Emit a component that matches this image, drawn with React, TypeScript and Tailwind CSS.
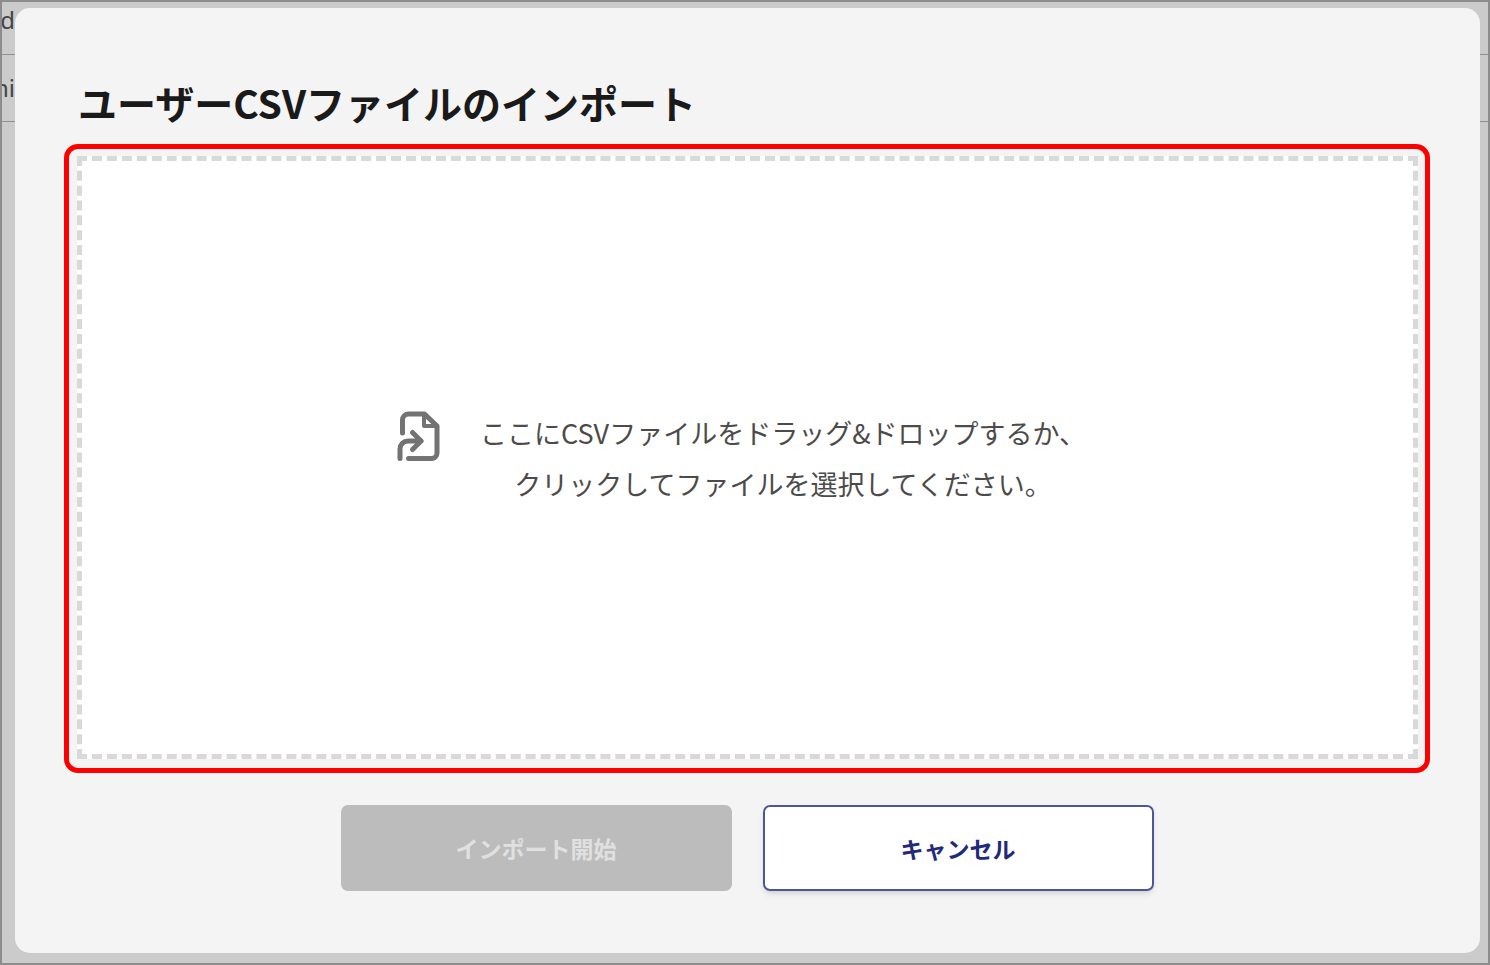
import { useState } from "react";
import type { ChangeEvent, DragEvent } from "react";

const backgroundRows = [
  { id: "email", text: "d", className: "h-[53px] pt-[2px]" },
  { id: "role", text: "ni", className: "h-[67px] pt-[17px]" },
];

function FileImportIcon() {
  return (
    <svg
      className="mt-1 h-[51px] w-11 shrink-0 text-[#737373]"
      viewBox="0 0 44 51"
      fill="none"
      stroke="currentColor"
      strokeWidth="5"
      strokeLinecap="round"
      strokeLinejoin="round"
      aria-hidden="true"
    >
      <path d="M5.500 22V9a6 6 0 0 1 6-6h16L40 15V42a5.500 5.500 0 0 1-5.500 5.500H11.500" />
      <path d="M27 4v11h11.500" strokeWidth="4" />
      <path d="M3 47.500V38a8 8 0 0 1 8-8h13" />
      <path d="M15.500 21.500 24 30l-8.500 8.500" />
    </svg>
  );
}

interface DropZoneProps {
  onSelect: (file: File) => void;
}

function DropZone({ onSelect }: DropZoneProps) {
  const handleChange = (e: ChangeEvent<HTMLInputElement>) => {
    const file = e.target.files?.[0];
    if (file) onSelect(file);
  };

  const handleDrop = (e: DragEvent<HTMLLabelElement>) => {
    e.preventDefault();
    const file = e.dataTransfer.files[0];
    if (file) onSelect(file);
  };

  return (
    <div className="flex flex-1 rounded-[14px] border-5 border-[#ff0000] px-[7px] pt-[7px] pb-[9px] pl-2">
      <label
        htmlFor="csv-file"
        className="flex flex-1 cursor-pointer items-center justify-center border-5 border-dashed border-[#d9d9d9] bg-white pr-3"
        onDragOver={(e) => e.preventDefault()}
        onDrop={handleDrop}
      >
        <input id="csv-file" type="file" accept=".csv" className="sr-only" onChange={handleChange} />
        <span className="flex items-start gap-[39px]">
          <FileImportIcon />
          <span className="text-center text-[27px] leading-[51px] text-[#4d4b4a]">
            ここにCSVファイルをドラッグ&amp;ドロップするか、
            <br />
            クリックしてファイルを選択してください。
          </span>
        </span>
      </label>
    </div>
  );
}

export default function App() {
  const [file, setFile] = useState<File | null>(null);

  return (
    <div className="relative flex min-h-screen flex-col overflow-hidden border-2 border-[#8c8c8c] bg-[#cbcbcb] pt-[6px] pr-2 pb-[10px] pl-[13px] font-['Noto_Sans_CJK_JP',sans-serif]">
      {/* Page behind the dialog */}
      <div className="absolute inset-0" aria-hidden="true">
        {backgroundRows.map((row) => (
          <div key={row.id} className={`border-b border-[#8f8f8f] ${row.className}`}>
            <div className="flex w-[13px] justify-end font-['Noto_Sans',sans-serif] text-2xl text-[#444444]">
              {row.text}
            </div>
          </div>
        ))}
      </div>

      <div
        role="dialog"
        aria-labelledby="import-title"
        className="relative flex flex-1 flex-col rounded-[15px] bg-[#f4f4f4] pt-16 pr-[50px] pb-[62px] pl-[49px]"
      >
        <h1 id="import-title" className="mb-3 px-3.5 text-[39px] leading-[60px] font-bold text-[#1a1a1a]">
          ユーザーCSVファイルのインポート
        </h1>

        <DropZone onSelect={setFile} />

        <div className="mt-8 flex justify-center gap-[31px]">
          <button
            type="button"
            disabled={!file}
            className="h-[86px] w-[391px] rounded-[7px] bg-[#bcbcbc] text-[23px] font-bold text-[#e0e0e0]"
          >
            インポート開始
          </button>
          <button
            type="button"
            className="h-[86px] w-[391px] rounded-[7px] border-2 border-[#4e5699] bg-white text-[23px] font-bold text-[#1f2a7a] shadow-md"
            onClick={() => setFile(null)}
          >
            キャンセル
          </button>
        </div>
      </div>
    </div>
  );
}
